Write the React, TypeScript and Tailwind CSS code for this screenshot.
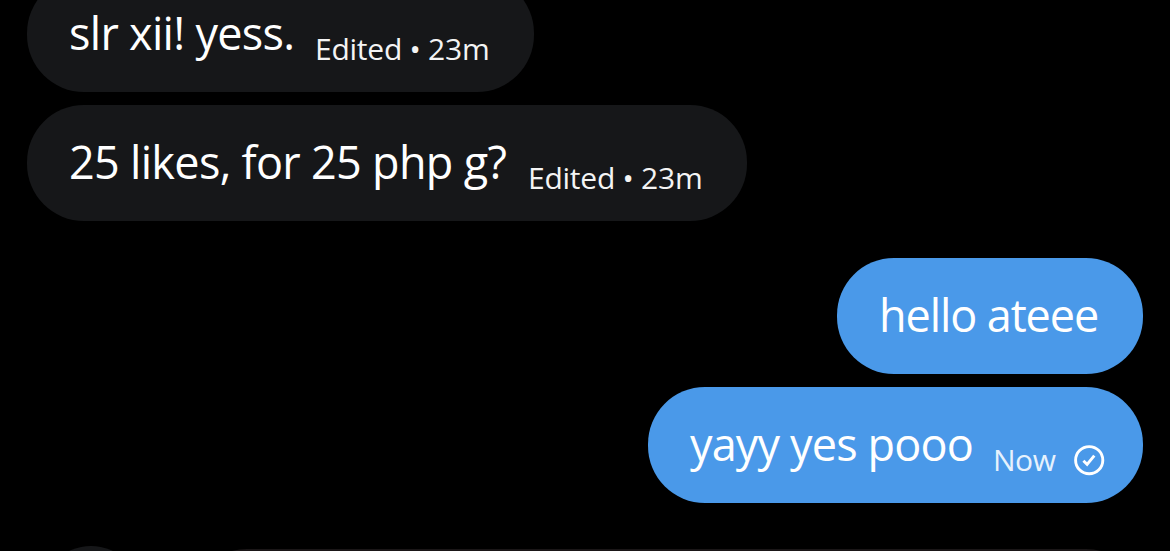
type Message = {
  text: string;
  mine?: boolean;
  meta?: string;
  sent?: boolean;
  // sizes the bubble
  bubble: string;
  // width and tracking of the message text
  body: string;
  // tracking of the small label
  label?: string;
};

const messages: Message[] = [
  {
    text: "slr xii! yess.",
    meta: "Edited • 23m",
    bubble: "w-[507px] -mt-6",
    body: "w-[246px] tracking-[-0.7px]",
    label: "tracking-[-0.25px]",
  },
  {
    text: "25 likes, for 25 php g?",
    meta: "Edited • 23m",
    bubble: "w-[720px] mt-[13px]",
    body: "w-[459px] tracking-[-0.7px]",
    label: "tracking-[-0.25px]",
  },
  {
    text: "hello ateee",
    mine: true,
    bubble: "w-[306px] mt-[37px]",
    body: "w-[222px] tracking-[-1.1px]",
  },
  {
    text: "yayy yes pooo",
    mine: true,
    meta: "Now",
    sent: true,
    bubble: "w-[495px] mt-[13px]",
    body: "w-[303px] tracking-[-0.85px]",
    label: "tracking-[-0.5px]",
  },
];

function SentIcon() {
  return (
    <svg
      className="ml-auto mr-[38px] mt-[58px] h-[31px] w-[31px] shrink-0"
      viewBox="0 0 31 31"
      fill="none"
      stroke="currentColor"
      strokeWidth="2.9"
    >
      <circle cx="15.2" cy="15.2" r="13.6" />
      <path d="M9.4 15.8l3.7 3.6 7.2-8.8" />
    </svg>
  );
}

function Bubble({ message }: { message: Message }) {
  const { text, mine, meta, sent, bubble, body, label } = message;

  return (
    <div
      className={`flex h-[116px] shrink-0 rounded-[57px] pl-[42px] whitespace-nowrap ${
        mine ? "self-end bg-[#4a99e9] text-white" : "self-start bg-[#161719] text-white"
      } ${bubble}`}
    >
      <span className={`shrink-0 pt-[23px] text-[45px] leading-[68px] ${body}`}>{text}</span>
      {meta && (
        <span className={`pt-[50px] text-[30px] leading-[46px] ${mine ? "text-[#e6f2fd]" : "text-[#f4f4f4]"} ${label ?? ""}`}>
          {meta}
        </span>
      )}
      {sent && <SentIcon />}
    </div>
  );
}

export default function App() {
  return (
    <main className="flex h-[551px] w-[1170px] flex-col overflow-hidden bg-black px-[27px] font-['Open_Sans',sans-serif]">
      {messages.map((message) => (
        <Bubble key={message.text} message={message} />
      ))}

      {/* composer, only its top edge is on screen */}
      <div className="mt-[43px] flex shrink-0 items-start">
        <div className="ml-[14px] h-[100px] w-[100px] rounded-full bg-[#161719]" />
        <div className="mt-[3px] ml-[49px] h-[116px] flex-1 rounded-[57px] bg-[#1a1617]" />
      </div>
    </main>
  );
}
